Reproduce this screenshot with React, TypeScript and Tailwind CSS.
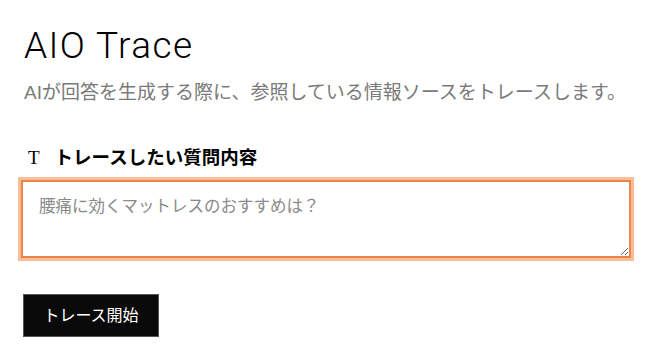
export default function App() {
  return (
    <div
      className="min-h-screen bg-white pl-[21px] pr-[19px] pt-[26px]"
      style={{ fontFamily: '"Liberation Sans", "Noto Sans CJK JP", sans-serif' }}
    >
      <h1
        className="ml-[3px] text-[37px] leading-[40px] font-light tracking-[1.4px] text-black"
        style={{ fontFamily: 'Roboto, "Liberation Sans", sans-serif' }}
      >
        AIO Trace
      </h1>
      <p className="ml-[3px] mt-[13px] text-[19px] leading-[28px] text-[#7a7a7a]">
        AIが回答を生成する際に、参照している情報ソースをトレースします。
      </p>

      <label className="mt-[37px] ml-[7px] flex items-center gap-[15px] text-[18.5px] leading-[28px] font-bold text-black">
        <span className="font-normal text-[19px]" style={{ fontFamily: '"Liberation Serif", serif' }}>
          T
        </span>
        トレースしたい質問内容
      </label>

      <textarea
        className="mt-[8px] block h-[78px] w-full border-2 border-[#ef8447] px-4 py-3 text-[16.5px] leading-[24px] text-black placeholder:text-[#8a8a8a] shadow-[0_0_0_3px_#f9bd9a] outline-none"
        placeholder="腰痛に効くマットレスのおすすめは？"
      />

      <button className="mt-[36px] ml-[2px] h-[43px] w-[136px] border border-[#555] bg-[#0a0a0a] text-[16px] text-white">
        トレース開始
      </button>
    </div>
  )
}
